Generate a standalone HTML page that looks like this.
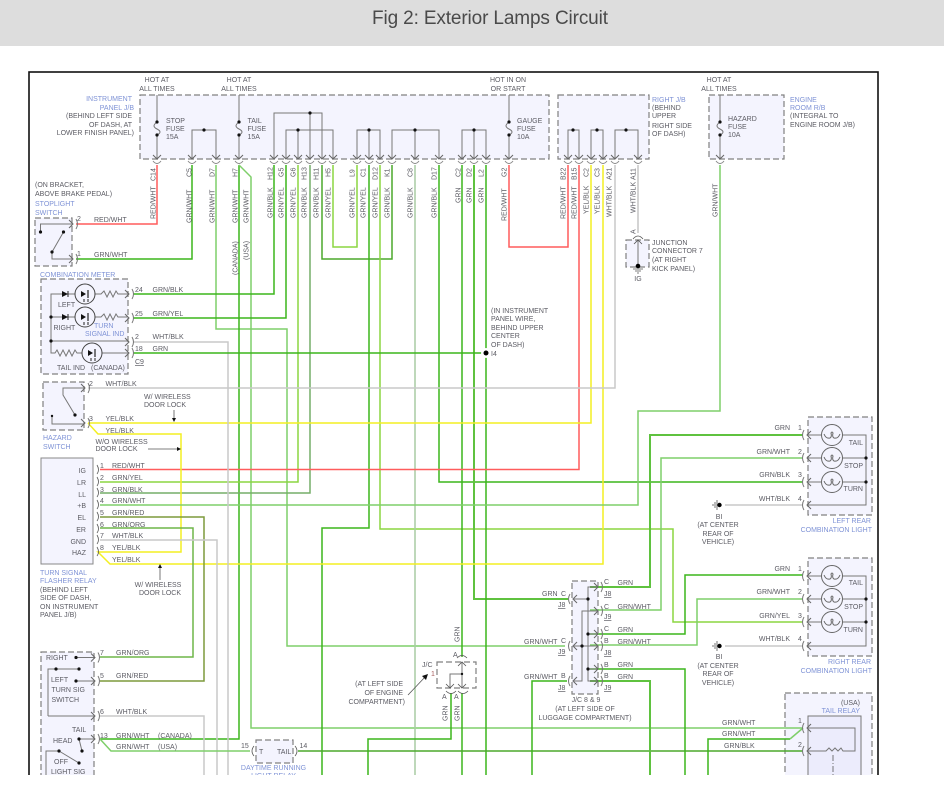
<!DOCTYPE html>
<html><head><meta charset="utf-8"><title>Fig 2: Exterior Lamps Circuit</title>
<style>
html,body{margin:0;padding:0;background:#fff;width:944px;height:809px;overflow:hidden}
svg{display:block}
text{font-family:"Liberation Sans",sans-serif;font-size:7px;fill:#5c5c64}
.b{fill:#7f93d6}
.e{text-anchor:end}
.m{text-anchor:middle}
.u{text-decoration:underline}
.box{fill:#f4f4fe;stroke:#808080;stroke-width:1.2;stroke-dasharray:6 3}
path,line,polyline{fill:none}
path.f{fill:#111;stroke:none}
.g1{stroke:#3cb51c;stroke-width:1.5}
.g2{stroke:#5fc23f;stroke-width:2}
.gw{stroke:#7fcf6a;stroke-width:1.5}
.gy{stroke:#8cd640;stroke-width:1.5}
.gb{stroke:#4ba82c;stroke-width:1.5}
.gg{stroke:#75ad68;stroke-width:1.5}
.gc{stroke:#a9cca4;stroke-width:1.5}
.r{stroke:#ff5c5c;stroke-width:1.5}
.y{stroke:#f3ef22;stroke-width:1.5}
.w{stroke:#c9c9c9;stroke-width:1.5}
.i{stroke:#777;stroke-width:1}
.k{stroke:#555;stroke-width:.8}
</style></head><body>
<svg width="944" height="809" viewBox="0 0 944 809" xmlns="http://www.w3.org/2000/svg">
<defs>
<g id="top"><path d="M-4 -4L0 0L4 -4" stroke="#666" stroke-width="1"/><path d="M-4 2Q0 7 4 2" stroke="#888" stroke-width="1"/></g>
<g id="rt"><path d="M-4 -4L0 0L-4 4" stroke="#666" stroke-width="1"/><path d="M3 -5Q6 0 3 5" stroke="#777" stroke-width="1"/></g>
<g id="lf"><path d="M4 -4L0 0L4 4" stroke="#666" stroke-width="1"/><path d="M-3 -5Q-6 0 -3 5" stroke="#777" stroke-width="1"/></g>
<g id="lamp"><circle r="10.5" fill="none" stroke="#666" stroke-width="1"/><path d="M-8 -1Q-6 4 -2 3Q0 2 -1 -2Q0 -4 1 -2Q0 2 2 3Q6 4 8 -1" stroke="#666" stroke-width="1"/></g>
<g id="ind"><circle r="10" fill="none" stroke="#444" stroke-width="1"/><path class="f" d="M-4 -3L1 0L-4 3Z"/><line x1="3" y1="-4" x2="3" y2="4" stroke="#222" stroke-width="1.2"/><path d="M-1 5V8M3 5V8" stroke="#222" stroke-width="1"/></g>
</defs>
<rect x="0" y="0" width="944" height="46" fill="#dddddd"/>
<text x="490" y="24" text-anchor="middle" textLength="236" style="font-size:19px;fill:#4a4a4a">Fig 2: Exterior Lamps Circuit</text>
<rect x="29" y="72" width="849" height="730" fill="#fff" stroke="#111" stroke-width="1.6"/>

<!-- boxes -->
<rect class="box" x="140" y="95" width="409" height="64"/>
<rect class="box" x="558" y="95" width="91" height="64"/>
<rect class="box" x="709" y="95" width="75" height="64"/>
<rect class="box" x="35" y="218" width="37" height="48"/>
<rect class="box" x="41" y="279" width="87" height="95"/>
<rect class="box" x="43" y="382" width="41" height="48"/>
<rect x="41" y="458" width="52" height="106" fill="#f4f4fe" stroke="#888" stroke-width="1"/>
<rect class="box" x="41" y="652" width="53" height="150"/>
<rect class="box" x="256" y="740" width="37" height="23"/>
<rect class="box" x="626" y="240" width="23" height="27"/>
<rect class="box" x="437" y="662" width="39" height="26" style="fill:#fff"/>
<rect class="box" x="572" y="581" width="26" height="113"/>
<rect class="box" x="808" y="417" width="64" height="98"/>
<rect class="box" x="808" y="558" width="64" height="98"/>
<rect class="box" x="785" y="693" width="87" height="110"/>
<rect x="808" y="716" width="53" height="90" fill="#ececfc" stroke="#777" stroke-width="1"/>

<!-- internal JB wiring -->
<path class="i" d="M157 95V122M157 135V159M239 95V122M239 135V159M509 95V122M509 135V159M720 95V122M720 135V159"/>
<path class="i" d="M157 122c-4 3-4 5 0 7c4 2 4 4 0 6M239 122c-4 3-4 5 0 7c4 2 4 4 0 6M509 122c-4 3-4 5 0 7c4 2 4 4 0 6M720 122c-4 3-4 5 0 7c4 2 4 4 0 6"/>
<path class="i" d="M192 159V130H216V159M274 159V113H322V159M310 113V159M286 159V130H333V159M298 130V159M357 159V130H380V159M369 130V159M392 159V130H439V159M415 130V159M462 159V130H486V159M474 130V159M568 159V130H579V159M591 159V130H603V159M615 159V130H638V159"/>
<g fill="#111"><circle cx="157" cy="122" r="1.6"/><circle cx="157" cy="135" r="1.6"/><circle cx="239" cy="122" r="1.6"/><circle cx="239" cy="135" r="1.6"/><circle cx="509" cy="122" r="1.6"/><circle cx="509" cy="135" r="1.6"/><circle cx="720" cy="122" r="1.6"/><circle cx="720" cy="135" r="1.6"/><circle cx="204" cy="130" r="1.6"/><circle cx="310" cy="113" r="1.6"/><circle cx="298" cy="130" r="1.6"/><circle cx="369" cy="130" r="1.6"/><circle cx="415" cy="130" r="1.6"/><circle cx="474" cy="130" r="1.6"/><circle cx="573" cy="130" r="1.6"/><circle cx="597" cy="130" r="1.6"/><circle cx="626" cy="130" r="1.6"/></g>

<!-- wires -->
<path class="r" d="M157 165V224H76"/>
<path class="g1" d="M192 165V259H76"/>
<path class="gw" d="M216 165V329H287V646H565"/>
<path class="g1" d="M239 165V739H100"/>
<path class="gw" d="M239 165L251 177V728H790L803 728"/>
<path class="g1" d="M274 165V294H133"/>
<path class="g1" d="M286 165V318H133"/>
<path class="gy" d="M298 165V482H100"/>
<path class="gg" d="M310 165V493H100"/>
<path class="gb" d="M322 165V259H392V165"/>
<path class="gy" d="M333 165V247H357V165"/>
<path class="g1" d="M369 165V528H322V775"/>
<path class="gy" d="M380 165V529H673V622H803"/>
<path class="gc" d="M415 165V775"/>
<path class="g1" d="M439 165V482H803"/>
<path class="g1" d="M462 165V657"/>
<path class="g1" d="M462 693V775"/>
<path class="g2" d="M474 165V599H568"/>
<path class="g1" d="M486 165V775"/>
<path class="r" d="M509 165V247H568V165"/>
<path class="r" d="M579 165V469.500H100"/>
<path class="y" d="M591 165V423H88"/>
<path class="y" d="M603 165V564H110L98 552H181V434H98L88 423"/>
<path class="w" d="M615 165V388H88"/>
<path class="i" d="M638 165V233" style="stroke:#aaa"/>
<path class="gw" d="M720 165V411H638V505H100"/>
<path class="w" d="M133 342H228V775"/>
<path class="g1" d="M133 353H483"/>
<path class="gb" d="M100 517H204V681H100" style="stroke:#7d9a3c"/>
<path class="gb" d="M100 528H193V657H100" style="stroke:#6eb548"/>
<path class="w" d="M100 540H217V775"/>
<path class="w" d="M100 716H204V775"/>
<path class="gw" d="M100 739L111 751H250"/>
<path class="gb" d="M298 751H803"/>
<path class="g1" d="M451 693V739H368V775"/>
<path class="g1" d="M567 681H532V775"/>
<path class="g2" d="M803 435H650V587H590"/>
<path class="gw" d="M803 458H661V610H590"/>
<path class="g1" d="M803 575H685V634H590"/>
<path class="g1" d="M590 669H685V775"/>
<path class="g2" d="M590 681H650V775"/>
<path class="gw" d="M803 599H697V645H590"/>
<path class="g1" d="M790 739H708V775"/>
<path class="gw" d="M790 739L803 728"/>
<path class="w" d="M725 505H803M725 646H803"/>
<circle cx="486" cy="353" r="5" fill="#fff"/><circle cx="486" cy="353" r="2.5" fill="#000"/>

<!-- connectors on JBs -->
<use href="#top" x="157" y="159"/><use href="#top" x="192" y="159"/><use href="#top" x="216" y="159"/><use href="#top" x="239" y="159"/><use href="#top" x="274" y="159"/><use href="#top" x="286" y="159"/><use href="#top" x="298" y="159"/><use href="#top" x="310" y="159"/><use href="#top" x="322" y="159"/><use href="#top" x="333" y="159"/><use href="#top" x="357" y="159"/><use href="#top" x="369" y="159"/><use href="#top" x="380" y="159"/><use href="#top" x="392" y="159"/><use href="#top" x="415" y="159"/><use href="#top" x="439" y="159"/><use href="#top" x="462" y="159"/><use href="#top" x="474" y="159"/><use href="#top" x="486" y="159"/><use href="#top" x="509" y="159"/><use href="#top" x="568" y="159"/><use href="#top" x="579" y="159"/><use href="#top" x="591" y="159"/><use href="#top" x="603" y="159"/><use href="#top" x="615" y="159"/><use href="#top" x="638" y="159"/><use href="#top" x="720" y="159"/>

<!-- stoplight switch -->
<path class="i" d="M72 224H40.500V232M63.500 232L52 252V259H72"/>
<g fill="#111"><circle cx="40.500" cy="232" r="1.6"/><circle cx="63.500" cy="232" r="1.6"/><circle cx="52" cy="252" r="1.6"/></g>
<use href="#rt" x="73" y="224"/><use href="#rt" x="73" y="259"/>

<!-- combination meter -->
<path class="i" d="M128 294H118l-2-3-3 6-3-6-3 6-3-6-3 3H95M75 294H51V353H55l2-3 3 6 3-6 3 6 3-6 3 6 3-6 2 3H82M102 353H128M128 341H51M128 317H118l-2-3-3 6-3-6-3 6-3-6-3 3H95M75 317H51"/>
<path class="f" d="M62 291L68 294L62 297Z M62 314L68 317L62 320Z"/>
<line x1="68" y1="291" x2="68" y2="297" stroke="#222"/><line x1="68" y1="314" x2="68" y2="320" stroke="#222"/>
<use href="#ind" x="85" y="294"/><use href="#ind" x="85" y="317"/><use href="#ind" x="92" y="353"/>
<g fill="#111"><circle cx="51" cy="317" r="1.6"/><circle cx="51" cy="341" r="1.6"/></g>
<use href="#rt" x="129" y="294"/><use href="#rt" x="129" y="318"/><use href="#rt" x="129" y="342"/><use href="#rt" x="129" y="353"/>

<!-- hazard switch -->
<path class="i" d="M84 388H63V395L75 415M52 416V424H84"/>
<g fill="#111"><circle cx="75" cy="415" r="1.6"/><circle cx="52" cy="416" r="1.2"/></g>
<use href="#rt" x="85" y="388"/><use href="#rt" x="85" y="423"/>
<path class="k" d="M174 410V419M148 449H178"/><path class="f" d="M172 418H176L174 422Z M177 447V451L181 449Z"/>

<!-- flasher connectors -->
<path class="k" d="M97 465q3 5 0 9M97 477q3 5 0 9M97 488q3 5 0 9M97 500q3 5 0 9M97 512q3 5 0 9M97 524q3 5 0 9M97 535q3 5 0 9M97 547q3 5 0 9"/>
<path class="k" d="M160 580V567"/><path class="f" d="M158 568H162L160 564Z"/>

<!-- light switch -->
<path class="i" d="M76 657.500H94M48 716V669H79M76 681H94M48 716H94M79 739H94M79 739L82 751M59 751H46V790M59 751L79 763"/>
<g fill="#111"><circle cx="76" cy="657.500" r="1.6"/><circle cx="56" cy="669" r="1.6"/><circle cx="79" cy="669" r="1.6"/><circle cx="76" cy="681" r="1.6"/><circle cx="79" cy="739" r="1.6"/><circle cx="82" cy="751" r="1.6"/><circle cx="59" cy="751" r="1.6"/><circle cx="79" cy="763" r="1.6"/></g>
<use href="#rt" x="95" y="657.500"/><use href="#rt" x="95" y="681"/><use href="#rt" x="95" y="716"/><use href="#rt" x="95" y="739"/>
<path class="k" d="M254 746q-4 5 0 10M295 746q4 5 0 10"/>

<!-- junction 7 -->
<path class="i" d="M638 240V266"/><circle cx="638" cy="266" r="2.3" fill="#000"/>
<path class="k" d="M633 239q5-6 10 0M634 244L638 240L642 244M633 269H643M635 271H641M637 273H639"/>

<!-- J/C 1 -->
<path class="i" d="M462 662V688M450 688V674H462"/><circle cx="462" cy="674" r="1.2" fill="#111"/>
<path class="k" d="M458 666L462 662L466 666M457 658q5-5 10 0M446 684L450 688L454 684M458 684L462 688L466 684M446 691q5 5 10 0M458 691q5 5 10 0"/>
<path class="k" d="M408 695L426 676"/><path class="f" d="M428 674L422 676L426 680Z"/>

<!-- J/C 8 9 -->
<path class="i" d="M597 587H588V681H597M588 599H574M588 634H597M588 669H597M597 611H582V681H574M574 646H597"/>
<g fill="#111"><circle cx="588" cy="599" r="1.6"/><circle cx="588" cy="634" r="1.6"/><circle cx="588" cy="669" r="1.6"/><circle cx="582" cy="646" r="1.6"/></g>
<use href="#lf" x="573" y="599"/><use href="#lf" x="573" y="646"/><use href="#lf" x="573" y="681"/>
<use href="#rt" x="598" y="587"/><use href="#rt" x="598" y="611"/><use href="#rt" x="598" y="634"/><use href="#rt" x="598" y="646"/><use href="#rt" x="598" y="669"/><use href="#rt" x="598" y="681"/>

<!-- rear lights -->
<path class="i" d="M808 435H822M842 435H866V505H808M808 458H822M842 458H866M808 482H822M842 482H866"/>
<use href="#lamp" x="832" y="435"/><use href="#lamp" x="832" y="458"/><use href="#lamp" x="832" y="482"/>
<circle cx="866" cy="458" r="1.6" fill="#111"/><circle cx="866" cy="482" r="1.6" fill="#111"/>
<use href="#lf" x="807" y="435"/><use href="#lf" x="807" y="458"/><use href="#lf" x="807" y="482"/><use href="#lf" x="807" y="505"/>
<path class="i" d="M808 576H822M842 576H866V646H808M808 599H822M842 599H866M808 622H822M842 622H866"/>
<use href="#lamp" x="832" y="576"/><use href="#lamp" x="832" y="599"/><use href="#lamp" x="832" y="622"/>
<circle cx="866" cy="599" r="1.6" fill="#111"/><circle cx="866" cy="622" r="1.6" fill="#111"/>
<use href="#lf" x="807" y="576"/><use href="#lf" x="807" y="599"/><use href="#lf" x="807" y="622"/><use href="#lf" x="807" y="646"/>
<circle cx="719.500" cy="505" r="2.2" fill="#000"/><path class="k" d="M717 500V510M715 502V508M713 504V506"/>
<circle cx="719.500" cy="646" r="2.2" fill="#000"/><path class="k" d="M717 641V651M715 643V649M713 645V647"/>

<!-- tail relay -->
<path class="i" d="M808 728H855V751H843l-2-3-3 3-3-3-3 3-3-3-3 3H808"/>
<path class="k" d="M833 755V790" stroke-dasharray="6 2 1 2"/>
<use href="#lf" x="807" y="728"/><use href="#lf" x="807" y="751"/>

<!-- top text -->
<text class="m" x="157" y="82">HOT AT</text><text class="m" x="157" y="91">ALL TIMES</text>
<text class="m" x="239" y="82">HOT AT</text><text class="m" x="239" y="91">ALL TIMES</text>
<text class="m" x="508" y="82">HOT IN ON</text><text class="m" x="508" y="91">OR START</text>
<text class="m" x="719" y="82">HOT AT</text><text class="m" x="719" y="91">ALL TIMES</text>
<text class="e b" x="132" y="101">INSTRUMENT</text><text class="e b" x="134" y="110">PANEL J/B</text>
<text class="e" x="132" y="118">(BEHIND LEFT SIDE</text><text class="e" x="132" y="127">OF DASH, AT</text><text class="e" x="134" y="135">LOWER FINISH PANEL)</text>
<text x="166" y="123">STOP</text><text x="166" y="131">FUSE</text><text x="166" y="139">15A</text>
<text x="247.500" y="123">TAIL</text><text x="247.500" y="131">FUSE</text><text x="247.500" y="139">15A</text>
<text x="517" y="123">GAUGE</text><text x="517" y="131">FUSE</text><text x="517" y="139">10A</text>
<text x="728" y="121">HAZARD</text><text x="728" y="129">FUSE</text><text x="728" y="137">10A</text>
<text class="b" x="652" y="102">RIGHT J/B</text><text x="652" y="110">(BEHIND</text><text x="652" y="118">UPPER</text><text x="652" y="128">RIGHT SIDE</text><text x="652" y="136">OF DASH)</text>
<text class="b" x="790" y="102">ENGINE</text><text class="b" x="790" y="110">ROOM R/B</text><text x="790" y="118">(INTEGRAL TO</text><text x="790" y="127">ENGINE ROOM J/B)</text>

<!-- vertical labels -->
<text transform="translate(155.500 181) rotate(-90)">C14</text><text transform="translate(155.500 219) rotate(-90)">RED/WHT</text>
<text transform="translate(191.500 177) rotate(-90)">C5</text><text transform="translate(191.500 223) rotate(-90)">GRN/WHT</text>
<text transform="translate(214.500 177) rotate(-90)">D7</text><text transform="translate(214.500 223) rotate(-90)">GRN/WHT</text>
<text transform="translate(237.500 177) rotate(-90)">H7</text><text transform="translate(237.500 223) rotate(-90)">GRN/WHT</text>
<text transform="translate(248.500 223) rotate(-90)">GRN/WHT</text>
<text transform="translate(237.500 275) rotate(-90)">(CANADA)</text><text transform="translate(248.500 260) rotate(-90)">(USA)</text>
<text transform="translate(272.500 180) rotate(-90)">H12</text><text transform="translate(272.500 218) rotate(-90)">GRN/BLK</text>
<text transform="translate(283.500 177) rotate(-90)">G5</text><text transform="translate(283.500 218) rotate(-90)">GRN/YEL</text>
<text transform="translate(295.500 177) rotate(-90)">G6</text><text transform="translate(295.500 218) rotate(-90)">GRN/YEL</text>
<text transform="translate(306.500 180) rotate(-90)">H13</text><text transform="translate(306.500 218) rotate(-90)">GRN/BLK</text>
<text transform="translate(318.500 180) rotate(-90)">H11</text><text transform="translate(318.500 218) rotate(-90)">GRN/BLK</text>
<text transform="translate(330.500 177) rotate(-90)">H5</text><text transform="translate(330.500 218) rotate(-90)">GRN/YEL</text>
<text transform="translate(354.500 177) rotate(-90)">L9</text><text transform="translate(354.500 218) rotate(-90)">GRN/YEL</text>
<text transform="translate(365.500 177) rotate(-90)">C1</text><text transform="translate(365.500 218) rotate(-90)">GRN/YEL</text>
<text transform="translate(377.500 180) rotate(-90)">D12</text><text transform="translate(377.500 218) rotate(-90)">GRN/YEL</text>
<text transform="translate(389.500 177) rotate(-90)">K1</text><text transform="translate(389.500 218) rotate(-90)">GRN/BLK</text>
<text transform="translate(412.500 177) rotate(-90)">C8</text><text transform="translate(412.500 218) rotate(-90)">GRN/BLK</text>
<text transform="translate(436.500 180) rotate(-90)">D17</text><text transform="translate(436.500 218) rotate(-90)">GRN/BLK</text>
<text transform="translate(460.500 177) rotate(-90)">C2</text><text transform="translate(460.500 203) rotate(-90)">GRN</text>
<text transform="translate(471.500 177) rotate(-90)">D2</text><text transform="translate(471.500 203) rotate(-90)">GRN</text>
<text transform="translate(483.500 177) rotate(-90)">L2</text><text transform="translate(483.500 203) rotate(-90)">GRN</text>
<text transform="translate(506.500 177) rotate(-90)">G2</text><text transform="translate(506.500 221) rotate(-90)">RED/WHT</text>
<text transform="translate(565.500 180) rotate(-90)">B22</text><text transform="translate(565.500 219) rotate(-90)">RED/WHT</text>
<text transform="translate(576.500 180) rotate(-90)">B15</text><text transform="translate(576.500 219) rotate(-90)">RED/WHT</text>
<text transform="translate(588.500 177) rotate(-90)">C2</text><text transform="translate(588.500 214) rotate(-90)">YEL/BLK</text>
<text transform="translate(599.500 177) rotate(-90)">C3</text><text transform="translate(599.500 214) rotate(-90)">YEL/BLK</text>
<text transform="translate(611.500 180) rotate(-90)">A21</text><text transform="translate(611.500 217) rotate(-90)">WHT/BLK</text>
<text transform="translate(635.500 180) rotate(-90)">A11</text><text transform="translate(635.500 213) rotate(-90)">WHT/BLK</text>
<text transform="translate(635.500 234) rotate(-90)">A</text>
<text transform="translate(717.500 217) rotate(-90)">GRN/WHT</text>
<text transform="translate(459.500 642) rotate(-90)">GRN</text>
<text transform="translate(447.500 721) rotate(-90)">GRN</text>
<text transform="translate(459.500 721) rotate(-90)">GRN</text>

<!-- left text -->
<text x="35" y="187">(ON BRACKET,</text><text x="35" y="196">ABOVE BRAKE PEDAL)</text>
<text class="b" x="35" y="206">STOPLIGHT</text><text class="b" x="35" y="215">SWITCH</text>
<text x="77" y="221">2</text><text x="94" y="222">RED/WHT</text><text x="77" y="256">1</text><text x="94" y="257">GRN/WHT</text>
<text class="b" x="40" y="277">COMBINATION METER</text>
<text x="135" y="292">24</text><text x="152.500" y="292">GRN/BLK</text>
<text x="135" y="316">25</text><text x="152.500" y="316">GRN/YEL</text>
<text x="135" y="339">2</text><text x="152.500" y="339">WHT/BLK</text>
<text x="135" y="351">18</text><text x="152.500" y="351">GRN</text>
<text class="u" x="135" y="364">C9</text>
<text x="58" y="307">LEFT</text><text x="53.500" y="330">RIGHT</text>
<text class="b" x="94" y="328">TURN</text><text class="b" x="85" y="336">SIGNAL IND</text>
<text x="57" y="370">TAIL IND</text><text x="91" y="370">(CANADA)</text>
<text x="89" y="386">2</text><text x="105.500" y="386">WHT/BLK</text>
<text x="144" y="399">W/ WIRELESS</text><text x="144" y="407">DOOR LOCK</text>
<text x="89" y="421">3</text><text x="105.500" y="421">YEL/BLK</text><text x="105.500" y="433">YEL/BLK</text>
<text x="95.500" y="444">W/O WIRELESS</text><text x="95.500" y="451">DOOR LOCK</text>
<text class="b" x="43" y="440">HAZARD</text><text class="b" x="43" y="449">SWITCH</text>
<text class="e" x="86" y="473">IG</text><text class="e" x="86" y="485">LR</text><text class="e" x="86" y="497">LL</text><text class="e" x="86" y="508">+B</text><text class="e" x="86" y="520">EL</text><text class="e" x="86" y="532">ER</text><text class="e" x="86" y="544">GND</text><text class="e" x="86" y="555">HAZ</text>
<text x="100" y="468">1</text><text x="112" y="468">RED/WHT</text>
<text x="100" y="480">2</text><text x="112" y="480">GRN/YEL</text>
<text x="100" y="492">3</text><text x="112" y="492">GRN/BLK</text>
<text x="100" y="503">4</text><text x="112" y="503">GRN/WHT</text>
<text x="100" y="515">5</text><text x="112" y="515">GRN/RED</text>
<text x="100" y="527">6</text><text x="112" y="527">GRN/ORG</text>
<text x="100" y="538">7</text><text x="112" y="538">WHT/BLK</text>
<text x="100" y="550">8</text><text x="112" y="550">YEL/BLK</text>
<text x="112" y="562">YEL/BLK</text>
<text class="b" x="40" y="575">TURN SIGNAL</text><text class="b" x="40" y="583">FLASHER RELAY</text>
<text x="40" y="592">(BEHIND LEFT</text><text x="40" y="600">SIDE OF DASH,</text><text x="40" y="609">ON INSTRUMENT</text><text x="40" y="617">PANEL J/B)</text>
<text class="m" x="158" y="587">W/ WIRELESS</text><text class="m" x="160" y="595">DOOR LOCK</text>
<text x="100" y="655">7</text><text x="116" y="655">GRN/ORG</text>
<text x="100" y="678">5</text><text x="116" y="678">GRN/RED</text>
<text x="100" y="714">6</text><text x="116" y="714">WHT/BLK</text>
<text x="100" y="738">13</text><text x="116" y="738">GRN/WHT</text><text x="158" y="738">(CANADA)</text>
<text x="116" y="749">GRN/WHT</text><text x="158" y="749">(USA)</text>
<text x="46" y="660">RIGHT</text><text x="51" y="682">LEFT</text><text x="51.500" y="692">TURN SIG</text><text x="51.500" y="702">SWITCH</text>
<text x="72" y="732">TAIL</text><text x="53" y="743">HEAD</text><text x="54" y="764">OFF</text><text x="51" y="774">LIGHT SIG</text>
<text x="241" y="748">15</text><text x="299.500" y="748">14</text><text x="259" y="754">T</text><text x="277" y="754">TAIL</text>
<text class="m b" x="273.500" y="770">DAYTIME RUNNING</text><text class="m b" x="273.500" y="778">LIGHT RELAY</text>

<!-- center -->
<text x="491" y="313">(IN INSTRUMENT</text><text x="491" y="321">PANEL WIRE,</text><text x="491" y="330">BEHIND UPPER</text><text x="491" y="338">CENTER</text><text x="491" y="347">OF DASH)</text><text x="491" y="356">I4</text>
<text x="652" y="245">JUNCTION</text><text x="652" y="253">CONNECTOR 7</text><text x="652" y="262">(AT RIGHT</text><text x="652" y="271">KICK PANEL)</text><text class="m" x="638" y="281">IG</text>
<text x="453" y="657">A</text><text x="422" y="667">J/C</text><text x="431" y="676" style="fill:#a86060">1</text>
<text x="442" y="699">A</text><text x="454" y="699">A</text>
<text class="e" x="403" y="686">(AT LEFT SIDE</text><text class="e" x="403" y="695">OF ENGINE</text><text class="e" x="405" y="704">COMPARTMENT)</text>
<text x="542" y="596">GRN</text><text x="561" y="596">C</text><text class="u" x="558" y="607">J8</text>
<text x="524" y="644">GRN/WHT</text><text x="561" y="643">C</text><text class="u" x="558" y="654">J9</text>
<text x="524" y="679">GRN/WHT</text><text x="561" y="678">B</text><text class="u" x="558" y="690">J8</text>
<text class="m" x="586" y="702">J/C 8 &amp; 9</text><text class="m" x="585" y="711">(AT LEFT SIDE OF</text><text class="m" x="585" y="720">LUGGAGE COMPARTMENT)</text>
<text x="604" y="584">C</text><text x="617.500" y="585">GRN</text><text class="u" x="604" y="596">J8</text>
<text x="604" y="609">C</text><text x="617.500" y="609">GRN/WHT</text><text class="u" x="604" y="619">J9</text>
<text x="604" y="631">C</text><text x="617.500" y="632">GRN</text>
<text x="604" y="643">B</text><text x="617.500" y="644">GRN/WHT</text><text class="u" x="604" y="655">J8</text>
<text x="604" y="667">B</text><text x="617.500" y="667">GRN</text>
<text x="604" y="678">B</text><text x="617.500" y="679">GRN</text><text class="u" x="604" y="690">J9</text>

<!-- right -->
<text class="e" x="790" y="430">GRN</text><text x="798" y="430">1</text>
<text class="e" x="790" y="454">GRN/WHT</text><text x="798" y="454">2</text>
<text class="e" x="790" y="477">GRN/BLK</text><text x="798" y="477">3</text>
<text class="e" x="790" y="501">WHT/BLK</text><text x="798" y="501">4</text>
<text class="e" x="790" y="571">GRN</text><text x="798" y="571">1</text>
<text class="e" x="790" y="594">GRN/WHT</text><text x="798" y="594">2</text>
<text class="e" x="790" y="618">GRN/YEL</text><text x="798" y="618">3</text>
<text class="e" x="790" y="641">WHT/BLK</text><text x="798" y="641">4</text>
<text class="m" x="719" y="519">BI</text><text class="m" x="718" y="527">(AT CENTER</text><text class="m" x="718" y="536">REAR OF</text><text class="m" x="718" y="544">VEHICLE)</text>
<text class="m" x="719" y="659">BI</text><text class="m" x="718" y="668">(AT CENTER</text><text class="m" x="718" y="676">REAR OF</text><text class="m" x="718" y="685">VEHICLE)</text>
<text class="e b" x="871" y="523">LEFT REAR</text><text class="e b" x="872" y="532">COMBINATION LIGHT</text>
<text class="e b" x="871" y="664">RIGHT REAR</text><text class="e b" x="872" y="673">COMBINATION LIGHT</text>
<text class="e" x="863" y="445">TAIL</text><text class="e" x="863" y="468">STOP</text><text class="e" x="863" y="491">TURN</text>
<text class="e" x="863" y="585">TAIL</text><text class="e" x="863" y="609">STOP</text><text class="e" x="863" y="632">TURN</text>
<text class="e" x="860" y="705">(USA)</text><text class="e b" x="860" y="713">TAIL RELAY</text>
<text x="798" y="723">1</text><text x="798" y="747">2</text>
<text x="722" y="725">GRN/WHT</text><text x="722" y="736">GRN/WHT</text><text x="724" y="748">GRN/BLK</text>

<rect x="0" y="775" width="944" height="34" fill="#fff"/>
</svg>
</body></html>
